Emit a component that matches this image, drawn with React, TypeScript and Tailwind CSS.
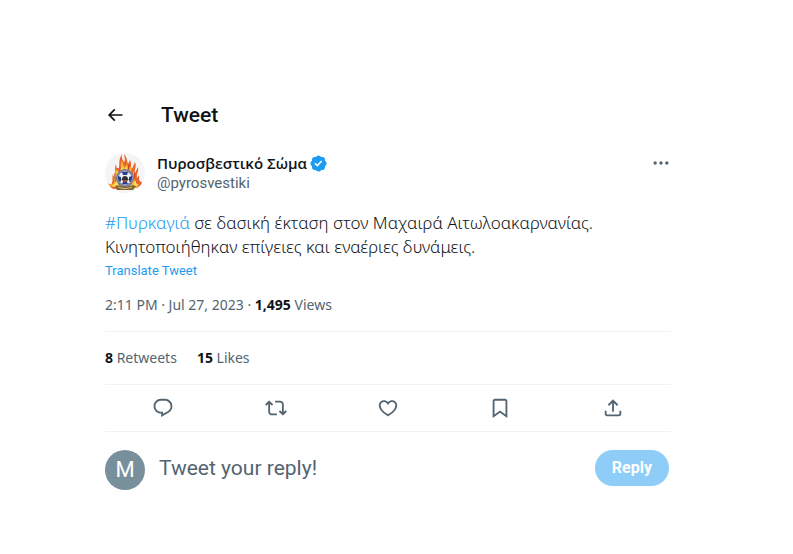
import { ReactNode } from 'react'

const icons = {
  back: 'M7.414 13l5.043 5.04-1.414 1.42L3.586 12l7.457-7.46 1.414 1.42L7.414 11H21v2H7.414z',
  more: 'M3 12c0-1.1.9-2 2-2s2 .9 2 2-.9 2-2 2-2-.9-2-2zm9 2c1.1 0 2-.9 2-2s-.9-2-2-2-2 .9-2 2 .9 2 2 2zm7 0c1.1 0 2-.9 2-2s-.9-2-2-2-2 .9-2 2 .9 2 2 2z',
  reply: 'M1.751 10c0-4.42 3.584-8 8.005-8h4.366c4.49 0 8.129 3.64 8.129 8.13 0 2.96-1.607 5.68-4.196 7.11l-8.054 4.46v-3.69h-.067c-4.49.1-8.183-3.51-8.183-8.01zm8.005-6c-3.317 0-6.005 2.69-6.005 6 0 3.37 2.77 6.08 6.138 6.01l.351-.01h1.761v2.3l5.087-2.81c1.951-1.08 3.163-3.13 3.163-5.36 0-3.39-2.744-6.13-6.129-6.13H9.756z',
  retweet: 'M4.5 3.88l4.432 4.14-1.364 1.46L5.5 7.55V16c0 1.1.896 2 2 2H13v2H7.5c-2.209 0-4-1.79-4-4V7.55L1.432 9.48.068 8.02 4.5 3.88zM16.5 6H11V4h5.5c2.209 0 4 1.79 4 4v8.45l2.068-1.93 1.364 1.46-4.432 4.14-4.432-4.14 1.364-1.46 2.068 1.93V8c0-1.1-.896-2-2-2z',
  like: 'M16.697 5.5c-1.222-.06-2.679.51-3.89 2.16l-.805 1.09-.806-1.09C9.984 6.01 8.526 5.44 7.304 5.5c-1.243.07-2.349.78-2.91 1.91-.552 1.12-.633 2.78.479 4.82 1.074 1.97 3.257 4.27 7.129 6.61 3.87-2.34 6.052-4.64 7.126-6.61 1.111-2.04 1.03-3.7.477-4.82-.561-1.13-1.666-1.84-2.908-1.91zm4.187 7.69c-1.351 2.48-4.001 5.12-8.379 7.67l-.503.3-.504-.3c-4.379-2.55-7.029-5.19-8.382-7.67-1.36-2.5-1.41-4.86-.514-6.67.887-1.79 2.647-2.91 4.601-3.01 1.651-.09 3.368.56 4.798 2.01 1.429-1.45 3.146-2.1 4.796-2.01 1.954.1 3.714 1.22 4.601 3.01.896 1.81.846 4.17-.514 6.67z',
  bookmark: 'M4 4.5C4 3.12 5.119 2 6.5 2h11C18.881 2 20 3.12 20 4.5v18.44l-8-5.71-8 5.71V4.5zM6.5 4c-.276 0-.5.22-.5.5v14.56l6-4.29 6 4.29V4.5c0-.28-.224-.5-.5-.5h-11z',
  share: 'M12 2.59l5.7 5.7-1.41 1.42L13 6.41V16h-2V6.41l-3.3 3.3-1.41-1.42L12 2.59zM21 15l-.02 3.51c0 1.38-1.12 2.49-2.5 2.49H5.5C4.11 21 3 19.88 3 18.5V15h2v3.5c0 .28.22.5.5.5h12.98c.28 0 .5-.22.5-.5L19 15h2z',
}

const actions: { label: string; icon: keyof typeof icons }[] = [
  { label: 'Reply', icon: 'reply' },
  { label: 'Retweet', icon: 'retweet' },
  { label: 'Like', icon: 'like' },
  { label: 'Bookmark', icon: 'bookmark' },
  { label: 'Share', icon: 'share' },
]

function Icon({ name, className }: { name: keyof typeof icons; className: string }) {
  return (
    <svg viewBox="0 0 24 24" fill="currentColor" aria-hidden="true" className={className}>
      <path d={icons[name]} />
    </svg>
  )
}

function Verified() {
  return (
    <svg viewBox="0 0 22 22" fill="#1d9bf0" role="img" aria-label="Verified account" className="size-[19px]">
      <path d="M20.396 11c-.018-.646-.215-1.275-.57-1.816-.354-.54-.852-.972-1.438-1.246.223-.607.27-1.264.14-1.897-.131-.634-.437-1.218-.882-1.687-.47-.445-1.053-.75-1.687-.882-.633-.13-1.29-.083-1.897.14-.273-.587-.704-1.086-1.245-1.44S11.647 1.62 11 1.604c-.646.017-1.273.213-1.813.568s-.969.854-1.24 1.44c-.608-.223-1.267-.272-1.902-.14-.635.13-1.22.436-1.69.882-.445.47-.749 1.055-.878 1.688-.13.633-.08 1.29.144 1.896-.587.274-1.087.705-1.443 1.245-.356.54-.555 1.17-.574 1.817.02.647.218 1.276.574 1.817.356.54.856.972 1.443 1.245-.224.606-.274 1.263-.144 1.896.13.634.433 1.218.877 1.688.47.443 1.054.747 1.687.878.633.132 1.29.084 1.897-.136.274.586.705 1.084 1.246 1.439.54.354 1.17.551 1.816.569.647-.016 1.276-.213 1.817-.567s.972-.854 1.245-1.44c.604.239 1.266.296 1.903.164.636-.132 1.22-.447 1.68-.907.46-.46.776-1.044.908-1.681s.075-1.299-.165-1.903c.586-.274 1.084-.705 1.439-1.246.354-.54.551-1.17.569-1.816zM9.662 14.85l-3.429-3.428 1.293-1.302 2.072 2.072 4.4-4.794 1.347 1.246z" />
    </svg>
  )
}

// Fire service emblem: flames behind a round badge
function Emblem() {
  return (
    <svg viewBox="0 0 40 40" role="img" aria-label="Πυροσβεστικό Σώμα" className="size-10 rounded-full bg-[#f5f5f5]">
      <path fill="#e8642a" d="M8 36C4 35 2 33 3 30c1 2 3 2 4 0 1-3 0-6 1-9 0 2 1 3 2 3 1-4-1-8 1-13 0 3 1 5 3 4 1-4-1-8 3-14-1 4 1 6 2 8 2-2 0-6 0-8 3 3 3 7 4 10l2-4c2 4 0 6 2 9l3-7c2 5-1 7 0 11l3-6c1 5-2 7-1 11l2-3c0 4 0 7 3 7-1 4-4 6-8 6z" />
      <path fill="#fbb52f" d="M9 34c-3 0-4-1-4-3 3 1 5-1 4-5l2-10 3 3 3-12 2 7 2-1 1-3c1 3 1 5 1 8l3-5 1 11 2-7v10l2-4v8l3 3c-2 1-4 1-6 0z" />
      <path fill="#ffe46b" d="M11 27l1-8 3 1 2-8 1 6 3-4 1 6 3-3v9zM7 33c3-1 4-3 4-6l3 7zM29 33l1-7c0 4 2 5 4 6z" />
      <path fill="none" stroke="#c74328" strokeWidth="1" d="M15 13c1 3-1 4 0 7M23 11c1 3 0 4 1 7M10 20c-1 3 1 5 0 9M30 20c-1 3 1 5 0 8" />
      <path fill="#806734" d="M10 33c4-2 7 1 10 0 4 1 7-2 11 0l-3 4H12z" />
      <circle cx="20" cy="25" r="9" fill="#6e7299" />
      <circle cx="20" cy="25" r="7.5" fill="none" stroke="#b4b4cc" strokeWidth="1" strokeDasharray="1 1" />
      <circle cx="20" cy="25" r="6.5" fill="#eff1f8" />
      <path fill="#263d82" d="M17 19h6l-1 3h-4zM13 23l3 1v4l-1 1-2-3zM27 23l-3 1v4l1 1 2-3zM18 29h4l1 2h-6z" />
      <path fill="#332d2d" d="M17 26c0-4 6-4 6 0l1 1h-8z" />
      <path fill="#8d5640" d="M17 27h6l-1 2h-4z" />
      <path stroke="#d0bd80" strokeWidth="1" fill="none" d="M13 34c5 2 9 2 14 0" />
    </svg>
  )
}

function Stat({ value, children }: { value: string; children: ReactNode }) {
  return (
    <a href="#" className="text-[#536471]">
      <span className="font-bold text-[#0f1419]">{value}</span> {children}
    </a>
  )
}

export default function App() {
  return (
    <main className="min-h-screen bg-white pt-[95px] pr-[122px] pb-16 pl-[105px] font-[Roboto,'Noto_Sans',sans-serif] text-[15px] leading-5 text-[#0f1419]">
      <header className="flex h-10 items-center gap-9">
        <button aria-label="Back" className="size-5">
          <Icon name="back" className="size-5" />
        </button>
        <h1 className="text-[21px] font-medium">Tweet</h1>
      </header>

      <article>
        <div className="mt-[18px] flex items-start gap-3">
          <Emblem />
          <div className="min-w-0 flex-1">
            <div className="flex items-center gap-0.5">
              <span className="font-['Open_Sans',sans-serif] font-semibold">Πυροσβεστικό Σώμα</span>
              <Verified />
            </div>
            <div className="text-[#536471]">@pyrosvestiki</div>
          </div>
          <button aria-label="More" className="size-5 text-[#536471]">
            <Icon name="more" className="size-5" />
          </button>
        </div>

        <p className="mt-[18px] font-['Noto_Sans',sans-serif] text-[17px] leading-6 font-light">
          <a href="#" className="text-[#1d9bf0]">#Πυρκαγιά</a> σε δασική έκταση στον Μαχαιρά Αιτωλοακαρνανίας.
          <br />
          Κινητοποιήθηκαν επίγειες και εναέριες δυνάμεις.
        </p>
        <button className="block text-[13px] leading-6 text-[#1d9bf0]">Translate Tweet</button>

        <div className="mt-3 font-['Noto_Sans',sans-serif] text-sm leading-5 text-[#536471]">
          <time dateTime="2023-07-27T14:11">2:11 PM · Jul 27, 2023</time> · <span className="font-bold text-[#0f1419]">1,495</span> Views
        </div>

        <div className="mt-4 flex h-[53px] items-center gap-5 border-t border-[#eff3f4] font-['Noto_Sans',sans-serif] text-sm leading-5">
          <Stat value="8">Retweets</Stat>
          <Stat value="15">Likes</Stat>
        </div>

        <div className="flex h-12 items-center justify-around border-y border-[#eff3f4] px-0.5 text-[#536471]">
          {actions.map(action => (
            <button key={action.label} aria-label={action.label}>
              <Icon name={action.icon} className="size-[22px]" />
            </button>
          ))}
        </div>
      </article>

      <form className="mt-[18px] flex items-start gap-3.5 pr-0.5" onSubmit={e => e.preventDefault()}>
        <div className="flex size-10 shrink-0 items-center justify-center rounded-full bg-[#78909c] text-[22px] text-white">M</div>
        <input
          aria-label="Tweet your reply"
          placeholder="Tweet your reply!"
          className="h-9 min-w-0 flex-1 text-[21px] outline-none placeholder:text-[#536471]"
        />
        <button className="h-9 shrink-0 rounded-full bg-[#8ecdf8] px-[17px] text-base font-bold text-white">Reply</button>
      </form>
    </main>
  )
}
